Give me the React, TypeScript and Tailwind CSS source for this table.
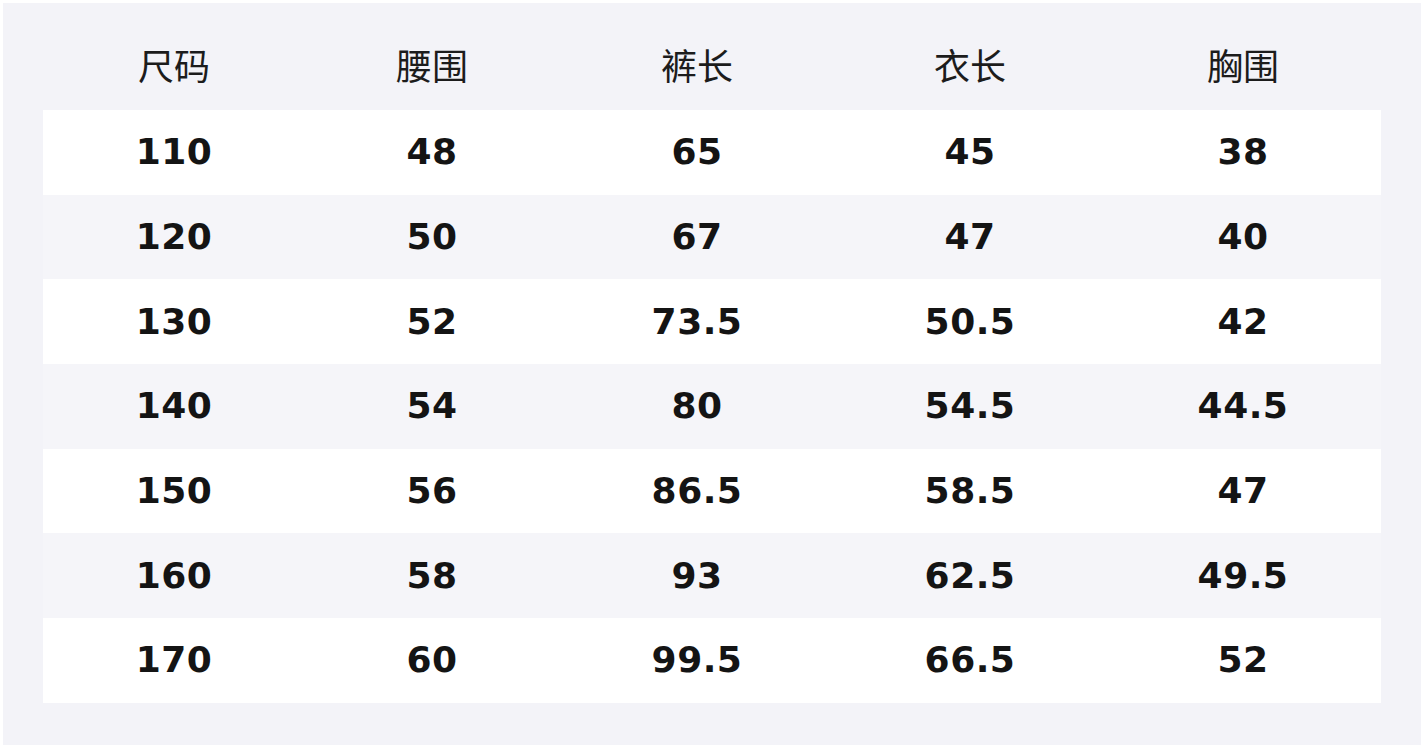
const HEADERS = ['尺码', '腰围', '裤长', '衣长', '胸围']

const ROWS: string[][] = [
  ['110', '48', '65', '45', '38'],
  ['120', '50', '67', '47', '40'],
  ['130', '52', '73.5', '50.5', '42'],
  ['140', '54', '80', '54.5', '44.5'],
  ['150', '56', '86.5', '58.5', '47'],
  ['160', '58', '93', '62.5', '49.5'],
  ['170', '60', '99.5', '66.5', '52'],
]

const COLS = 'grid grid-cols-[262px_254px_276px_270px_276px]'

export default function App() {
  return (
    <div className="w-[1424px] h-[748px] bg-white p-[3px]">
      <div className="w-full h-full bg-[#f3f3f8] px-[40px] pt-[22px] pb-[40px]">
        {/* header */}
        <div className={`${COLS} h-[85px] pb-[8px] items-center`}>
          {HEADERS.map((h) => (
            <div
              key={h}
              className="text-center text-[36px] leading-none text-[#1c1c1c] font-['Noto_Sans_CJK_SC','Noto_Sans',sans-serif]"
            >
              {h}
            </div>
          ))}
        </div>

        {/* body */}
        {ROWS.map((row, i) => (
          <div
            key={row[0]}
            className={`${COLS} h-[84.7px] items-center ${i % 2 === 0 ? 'bg-white' : 'bg-[#f5f5f9]'}`}
          >
            {row.map((v, j) => (
              <div
                key={j}
                className="text-center text-[36px] leading-none font-bold text-[#141414] font-['DejaVu_Sans',sans-serif] tracking-[0.5px]"
              >
                {v}
              </div>
            ))}
          </div>
        ))}
      </div>
    </div>
  )
}
